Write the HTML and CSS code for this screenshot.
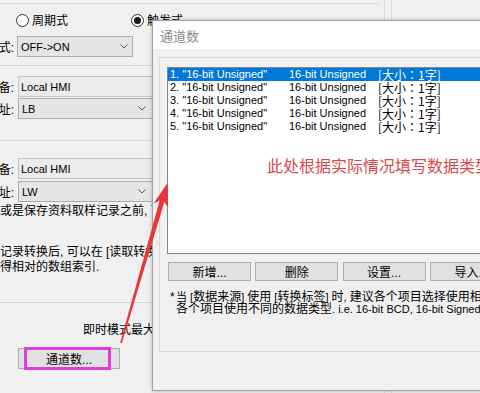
FILE: index.html
```html
<!DOCTYPE html>
<html>
<head>
<meta charset="utf-8">
<link rel="stylesheet" href="styles.css">
</head>
<body>
<div class="desk">
  <div class="win">
    <div class="topline"></div>
    <div class="radios">
      <div class="radio"><span class="circle"></span><span>周期式</span></div>
      <div class="radio on"><span class="circle"></span><span>触发式</span></div>
    </div>
    <div class="row row-trig">
      <span class="lbl">触发方式:</span>
      <div class="combo combo-short"><span>OFF-&gt;ON</span><svg class="chev" width="8" height="5" viewBox="0 0 8 5"><polyline points="0.5,0.5 4,4 7.5,0.5" fill="none" stroke="#555" stroke-width="1"/></svg></div>
    </div>
    <div class="sep sep1"></div>
    <div class="row row-a">
      <span class="lbl">设备:</span>
      <div class="field">Local HMI</div>
    </div>
    <div class="row row-b">
      <span class="lbl">地址:</span>
      <div class="combo combo-long"><span>LB</span><svg class="chev" width="8" height="5" viewBox="0 0 8 5"><polyline points="0.5,0.5 4,4 7.5,0.5" fill="none" stroke="#555" stroke-width="1"/></svg></div>
    </div>
    <div class="sep sep2"></div>
    <div class="row row-c">
      <span class="lbl">设备:</span>
      <div class="field">Local HMI</div>
    </div>
    <div class="row row-d">
      <span class="lbl">地址:</span>
      <div class="combo combo-long"><span>LW</span><svg class="chev" width="8" height="5" viewBox="0 0 8 5"><polyline points="0.5,0.5 4,4 7.5,0.5" fill="none" stroke="#555" stroke-width="1"/></svg></div>
    </div>
    <p class="txt t1">或是保存资料取样记录之前, 可先设定转换标签的数值</p>
    <p class="txt t2">记录转换后, 可以在 [读取转换标签] 中读取<br>得相对的数组索引.</p>
    <div class="sep sep3"></div>
    <p class="txt t3">即时模式最大通道数</p>
    <div class="btnrow"><div class="wbtn">通道数...</div></div>
  </div>
  <div class="gutter"></div>
  <div class="side"></div>
</div>

<div class="dialog">
  <div class="titlebar">通道数</div>
  <div class="dbody">
    <div class="frame">
      <div class="list">
        <div class="item sel"><span>1. "16-bit Unsigned"</span><span>16-bit Unsigned</span><span class="sz">[大小：1字]</span></div>
        <div class="item"><span>2. "16-bit Unsigned"</span><span>16-bit Unsigned</span><span class="sz">[大小：1字]</span></div>
        <div class="item"><span>3. "16-bit Unsigned"</span><span>16-bit Unsigned</span><span class="sz">[大小：1字]</span></div>
        <div class="item"><span>4. "16-bit Unsigned"</span><span>16-bit Unsigned</span><span class="sz">[大小：1字]</span></div>
        <div class="item"><span>5. "16-bit Unsigned"</span><span>16-bit Unsigned</span><span class="sz">[大小：1字]</span></div>
        <div class="hint">此处根据实际情况填写数据类型</div>
      </div>
      <div class="btns">
        <div class="btn">新增...</div>
        <div class="btn">删除</div>
        <div class="btn">设置...</div>
        <div class="btn">导入...</div>
      </div>
      <div class="note">
        <span class="star">*</span>
        <p><span class="lat">当 [</span>数据来源<span class="lat">] </span>使用<span class="lat"> [</span>转换标签<span class="lat">] </span>时<span class="lat">, </span>建议各个项目选择使用相同的数据类型<br>各个项目使用不同的数据类型<span class="lat">. i.e. 16-bit BCD, 16-bit Signed, 32-bit</span></p>
      </div>
    </div>
  </div>
</div>

<div class="mark"></div>

<svg class="arrow" width="480" height="393" viewBox="0 0 480 393">
  <polygon points="167.5,183 168.3,207.5 164.3,202 121.8,343.2 120.2,342.8 159.7,200.5 153.6,203.6" fill="#e8353b"/>
</svg>
</body>
</html>
```

FILE: styles.css
```css
* {
  box-sizing: border-box;
  margin: 0;
  padding: 0;
}

html, body {
  width: 480px;
  height: 393px;
  overflow: hidden;
}

body {
  position: relative;
  background: #f0f0f0;
  font-family: "Liberation Sans", "Noto Sans CJK SC", sans-serif;
  font-size: 12px;
  color: #000;
}

.desk {
  display: flex;
  height: 393px;
}

.win {
  width: 385px;
  flex: none;
  border-right: 1px solid #dcdcdc;
}

.gutter {
  width: 6px;
  flex: none;
}

.side {
  flex: 1;
  border-left: 1px solid #dcdcdc;
}

.topline {
  height: 4px;
  border-bottom: 1px solid #d6d6d6;
  margin-right: 5px;
}

.radios {
  display: flex;
  align-items: center;
  height: 32px;
}

.radio {
  display: flex;
  align-items: center;
  gap: 3px;
  white-space: nowrap;
  font-family: "Noto Sans CJK SC", sans-serif;
  font-size: 12px;
  line-height: 14px;
}

.radio:first-child {
  margin-left: 16px;
}

.radio.on {
  margin-left: 63px;
}

.circle {
  width: 13px;
  height: 13px;
  border: 1px solid #333;
  border-radius: 50%;
  background: #fff;
  display: flex;
  align-items: center;
  justify-content: center;
}

.radio.on .circle::after {
  content: "";
  width: 7px;
  height: 7px;
  border-radius: 50%;
  background: #1a1a1a;
}

.row {
  display: flex;
  align-items: center;
  height: 21px;
}

.lbl {
  width: 14px;
  flex: none;
  display: flex;
  justify-content: flex-end;
  white-space: nowrap;
  font-size: 12px;
}

.combo,
.field {
  height: 21px;
  flex: none;
  display: flex;
  align-items: center;
  justify-content: space-between;
  border: 1px solid #adadad;
  background: #e5e5e5;
  font-size: 11px;
  white-space: nowrap;
}

.field {
  border-color: #c4c4c4;
  background: #ebebeb;
  padding-left: 2px;
  width: 135px;
  margin-left: 4px;
}

.combo-short {
  width: 116px;
  margin-left: 3px;
  padding: 0 4px 0 3px;
}

.combo-long {
  width: 135px;
  margin-left: 4px;
  padding: 0 6px 0 3px;
}

.chev {
  display: block;
}

.sep {
  height: 0;
  border-top: 1px solid #d6d6d6;
  margin-right: 5px;
}

.sep1 { margin-top: 8px; }
.row-a { margin-top: 10px; }
.row-b { margin-top: 1px; }
.sep2 { margin-top: 21px; }
.row-c { margin-top: 17px; }
.row-d { margin-top: 2px; }

.txt {
  font-size: 12px;
  line-height: 15px;
  white-space: nowrap;
}

.t1 { margin-top: 2px; }
.t2 { margin-top: 26px; }
.sep3 { margin-top: 27px; }
.t3 {
  margin-top: 20px;
  padding-left: 83px;
}

.btnrow {
  margin-top: 10px;
  padding-left: 18px;
}

.wbtn {
  width: 102px;
  height: 21px;
  border: 1px solid #adadad;
  background: #e1e1e1;
  display: flex;
  align-items: center;
  justify-content: center;
  font-size: 12px;
  white-space: nowrap;
}

/* dialog window */
.dialog {
  position: absolute;
  left: 152px;
  top: 20px;
  width: 340px;
  height: 371px;
  border: 1px solid #a0a0a0;
  background: #f0f0f0;
  box-shadow: 0 0 4px rgba(0, 0, 0, 0.25);
  display: flex;
  flex-direction: column;
}

.titlebar {
  height: 28px;
  flex: none;
  background: #fff;
  padding-left: 7px;
  display: flex;
  align-items: center;
  font-family: "Noto Sans CJK SC", sans-serif;
  font-size: 13px;
  color: #8c8c8c;
}

.dbody {
  padding: 8px 0 0 6px;
}

.frame {
  height: 295px;
  border: 1px solid #d9d9d9;
  border-right: none;
  padding: 9px 0 0 7px;
}

.list {
  position: relative;
  width: 330px;
  height: 187px;
  border: 1px solid #828790;
  background: #fff;
}

.item {
  display: grid;
  grid-template-columns: 119px 89px auto;
  height: 13px;
  line-height: 13px;
  padding-left: 2px;
  font-size: 11px;
  white-space: nowrap;
}

.item .sz {
  font-family: "Noto Sans CJK TC", sans-serif;
  font-size: 12px;
}

.item.sel {
  background: #0078d7;
  color: #fff;
}

.hint {
  position: absolute;
  left: 99px;
  top: 87px;
  font-family: "Noto Sans CJK SC", sans-serif;
  font-size: 16px;
  line-height: 20px;
  color: #dc474c;
  white-space: nowrap;
}

.btns {
  display: grid;
  grid-template-columns: repeat(4, 83px);
  column-gap: 4.3px;
  margin: 8px 0 0 1px;
}

.btn {
  height: 19px;
  border: 1px solid #adadad;
  background: #e1e1e1;
  display: flex;
  align-items: center;
  justify-content: center;
  font-size: 12px;
  white-space: nowrap;
}

.note {
  display: flex;
  margin: 10px 0 0 3px;
  font-size: 12px;
  line-height: 12px;
  white-space: nowrap;
}

.note .lat {
  font-size: 11px;
}

.star {
  width: 6px;
  flex: none;
}

/* annotations */
.mark {
  position: absolute;
  left: 24px;
  top: 347px;
  width: 87px;
  height: 23px;
  border: 3px solid #e03ce0;
}

.arrow {
  position: absolute;
  left: 0;
  top: 0;
  pointer-events: none;
}
```
